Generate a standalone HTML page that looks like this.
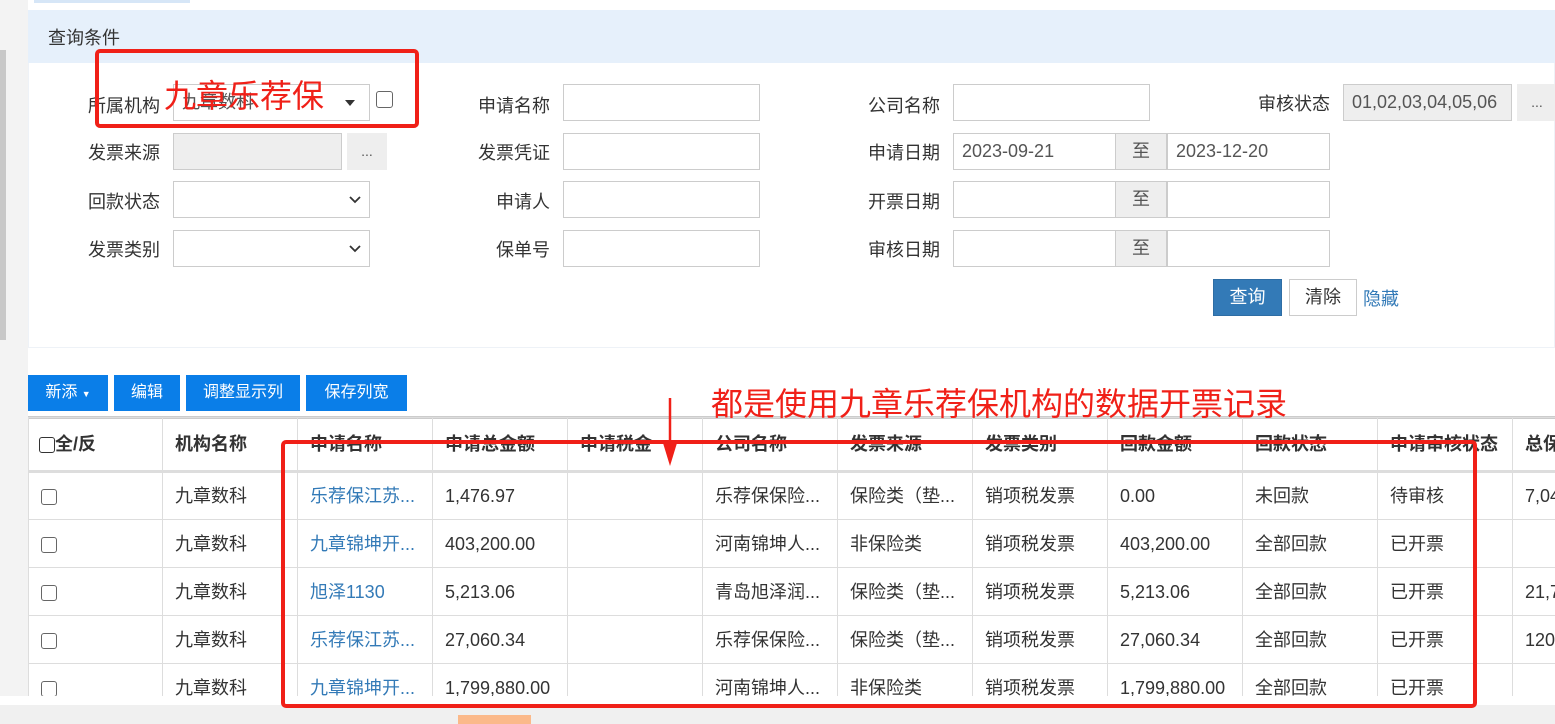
<!DOCTYPE html>
<html><head><meta charset="utf-8"><style>
*{box-sizing:border-box;margin:0;padding:0}
body{width:1555px;height:724px;overflow:hidden;background:#fff;font-family:"Liberation Sans","Noto Sans CJK SC",sans-serif;font-size:18px;color:#333;position:relative}
.a{position:absolute}
.lbl{position:absolute;text-align:right;width:110px;line-height:37px;color:#333}
.inp{position:absolute;height:37px;border:1px solid #ccc;background:#fff;line-height:35px;padding-left:8px;color:#555}
.g{background:#eee}
.btn{position:absolute;background:#0a7ee8;color:#fff;font-size:16px;text-align:center;line-height:36px;height:36px;top:375px}
table{border-collapse:collapse;position:absolute;left:28px;top:417px;table-layout:fixed;width:1619px}
td{border:1px solid #ddd;height:48px;line-height:22px;padding:0 0 0 12px;white-space:nowrap;overflow:hidden;vertical-align:middle}
tr.h td{height:54px;font-weight:bold;border-bottom:3px solid #ddd}
.cb{display:inline-block;width:16px;height:16px;border:1px solid #666;border-radius:3px;vertical-align:middle}
.lk{color:#337ab7}
.red{position:absolute;border:4px solid #f02018;border-radius:5px}
.rt{position:absolute;color:#f02018;font-size:32px;line-height:40px}
</style></head><body>
<div class="a" style="left:0;top:0;width:28px;height:724px;background:#f3f3f3"></div>
<div class="a" style="left:0;top:50px;width:6px;height:290px;background:#c8c8c8"></div>
<div class="a" style="left:34px;top:0;width:156px;height:3px;background:#d6e6f7"></div>
<div class="a" style="left:28px;top:10px;width:1527px;height:338px;border:1px solid #eef2f7"></div>
<div class="a" style="left:28px;top:10px;width:1527px;height:53px;background:#e6f0fb"></div>
<div class="a" style="left:48px;top:24px">查询条件</div>

<div class="lbl" style="left:50px;top:88px">所属机构</div>
<div class="inp" style="left:173px;top:84px;width:197px">九章数科<span style="position:absolute;right:14px;top:15px;border:5px solid transparent;border-top:6px solid #333"></span></div>
<span class="a cb" style="left:376px;top:91px;width:17px;height:17px"></span>
<div class="lbl" style="left:50px;top:135px">发票来源</div>
<div class="inp g" style="left:173px;top:133px;width:169px"></div>
<div class="inp g" style="left:347px;top:133px;width:40px;border-color:#eee;text-align:center;padding:0;font-size:14px">...</div>
<div class="lbl" style="left:50px;top:184px">回款状态</div>
<div class="inp" style="left:173px;top:181px;width:197px"><svg style="position:absolute;right:8px;top:14px" width="12" height="8"><path d="M1 1 L6 6 L11 1" stroke="#333" stroke-width="1.8" fill="none"/></svg></div>
<div class="lbl" style="left:50px;top:232px">发票类别</div>
<div class="inp" style="left:173px;top:230px;width:197px"><svg style="position:absolute;right:8px;top:14px" width="12" height="8"><path d="M1 1 L6 6 L11 1" stroke="#333" stroke-width="1.8" fill="none"/></svg></div>

<div class="lbl" style="left:440px;top:88px">申请名称</div>
<div class="inp" style="left:563px;top:84px;width:197px"></div>
<div class="lbl" style="left:440px;top:135px">发票凭证</div>
<div class="inp" style="left:563px;top:133px;width:197px"></div>
<div class="lbl" style="left:440px;top:184px">申请人</div>
<div class="inp" style="left:563px;top:181px;width:197px"></div>
<div class="lbl" style="left:440px;top:232px">保单号</div>
<div class="inp" style="left:563px;top:230px;width:197px"></div>

<div class="lbl" style="left:830px;top:88px">公司名称</div>
<div class="inp" style="left:953px;top:84px;width:197px"></div>
<div class="lbl" style="left:830px;top:135px">申请日期</div>
<div class="inp" style="left:953px;top:133px;width:163px">2023-09-21</div>
<div class="inp g" style="left:1115px;top:133px;width:52px;text-align:center;padding:0">至</div>
<div class="inp" style="left:1167px;top:133px;width:163px">2023-12-20</div>
<div class="lbl" style="left:830px;top:184px">开票日期</div>
<div class="inp" style="left:953px;top:181px;width:163px"></div>
<div class="inp g" style="left:1115px;top:181px;width:52px;text-align:center;padding:0">至</div>
<div class="inp" style="left:1167px;top:181px;width:163px"></div>
<div class="lbl" style="left:830px;top:232px">审核日期</div>
<div class="inp" style="left:953px;top:230px;width:163px"></div>
<div class="inp g" style="left:1115px;top:230px;width:52px;text-align:center;padding:0">至</div>
<div class="inp" style="left:1167px;top:230px;width:163px"></div>

<div class="lbl" style="left:1220px;top:86px">审核状态</div>
<div class="inp g" style="left:1343px;top:84px;width:169px">01,02,03,04,05,06</div>
<div class="inp g" style="left:1517px;top:84px;width:40px;border-color:#eee;text-align:center;padding:0;font-size:14px">...</div>

<div class="a" style="left:1213px;top:279px;width:69px;height:37px;background:#337ab7;color:#fff;text-align:center;line-height:35px;border:1px solid #2e6da4">查询</div>
<div class="a" style="left:1289px;top:279px;width:68px;height:37px;border:1px solid #ccc;text-align:center;line-height:35px">清除</div>
<div class="a" style="left:1363px;top:285px;color:#337ab7">隐藏</div>

<div class="btn" style="left:28px;width:80px">新添 <span style="font-size:9px">▼</span></div>
<div class="btn" style="left:114px;width:66px">编辑</div>
<div class="btn" style="left:186px;width:114px">调整显示列</div>
<div class="btn" style="left:306px;width:101px">保存列宽</div>
<div class="a" style="left:28px;top:416px;width:1527px;height:3px;background:#ccc"></div>

<table>
<colgroup><col style="width:134px"><col style="width:135px"><col style="width:135px"><col style="width:135px"><col style="width:135px"><col style="width:135px"><col style="width:135px"><col style="width:135px"><col style="width:135px"><col style="width:135px"><col style="width:135px"><col style="width:135px"></colgroup>
<tr class="h"><td style="padding-left:10px"><span class="cb" style="border-color:#333"></span>全/反</td><td>机构名称</td><td>申请名称</td><td>申请总金额</td><td>申请税金</td><td>公司名称</td><td>发票来源</td><td>发票类别</td><td>回款金额</td><td>回款状态</td><td>申请审核状态</td><td>总保</td></tr>
<tr><td><span class="cb"></span></td><td>九章数科</td><td class="lk">乐荐保江苏...</td><td>1,476.97</td><td></td><td>乐荐保保险...</td><td>保险类（垫...</td><td>销项税发票</td><td>0.00</td><td>未回款</td><td>待审核</td><td>7,04</td></tr>
<tr><td><span class="cb"></span></td><td>九章数科</td><td class="lk">九章锦坤开...</td><td>403,200.00</td><td></td><td>河南锦坤人...</td><td>非保险类</td><td>销项税发票</td><td>403,200.00</td><td>全部回款</td><td>已开票</td><td></td></tr>
<tr><td><span class="cb"></span></td><td>九章数科</td><td class="lk">旭泽1130</td><td>5,213.06</td><td></td><td>青岛旭泽润...</td><td>保险类（垫...</td><td>销项税发票</td><td>5,213.06</td><td>全部回款</td><td>已开票</td><td>21,7</td></tr>
<tr><td><span class="cb"></span></td><td>九章数科</td><td class="lk">乐荐保江苏...</td><td>27,060.34</td><td></td><td>乐荐保保险...</td><td>保险类（垫...</td><td>销项税发票</td><td>27,060.34</td><td>全部回款</td><td>已开票</td><td>120</td></tr>
<tr><td><span class="cb"></span></td><td>九章数科</td><td class="lk">九章锦坤开...</td><td>1,799,880.00</td><td></td><td>河南锦坤人...</td><td>非保险类</td><td>销项税发票</td><td>1,799,880.00</td><td>全部回款</td><td>已开票</td><td></td></tr>
</table>
<div class="a" style="left:0;top:696px;width:1555px;height:28px;background:#fff"></div>
<div class="a" style="left:0;top:705px;width:1555px;height:19px;background:#f0f0f0"></div>
<div class="a" style="left:458px;top:715px;width:73px;height:9px;background:#fbb98a"></div>

<div class="red" style="left:95px;top:49px;width:324px;height:79px"></div>
<div class="rt" style="left:164px;top:76px">九章乐荐保</div>
<div class="red" style="left:281px;top:440px;width:1196px;height:268px"></div>
<div class="rt" style="left:711px;top:384px">都是使用九章乐荐保机构的数据开票记录</div>
<svg class="a" style="left:660px;top:398px" width="20" height="70"><line x1="10" y1="0" x2="10" y2="55" stroke="#f02018" stroke-width="2.5"/><polygon points="3,45 17,45 10,68" fill="#f02018"/></svg>
</body></html>
